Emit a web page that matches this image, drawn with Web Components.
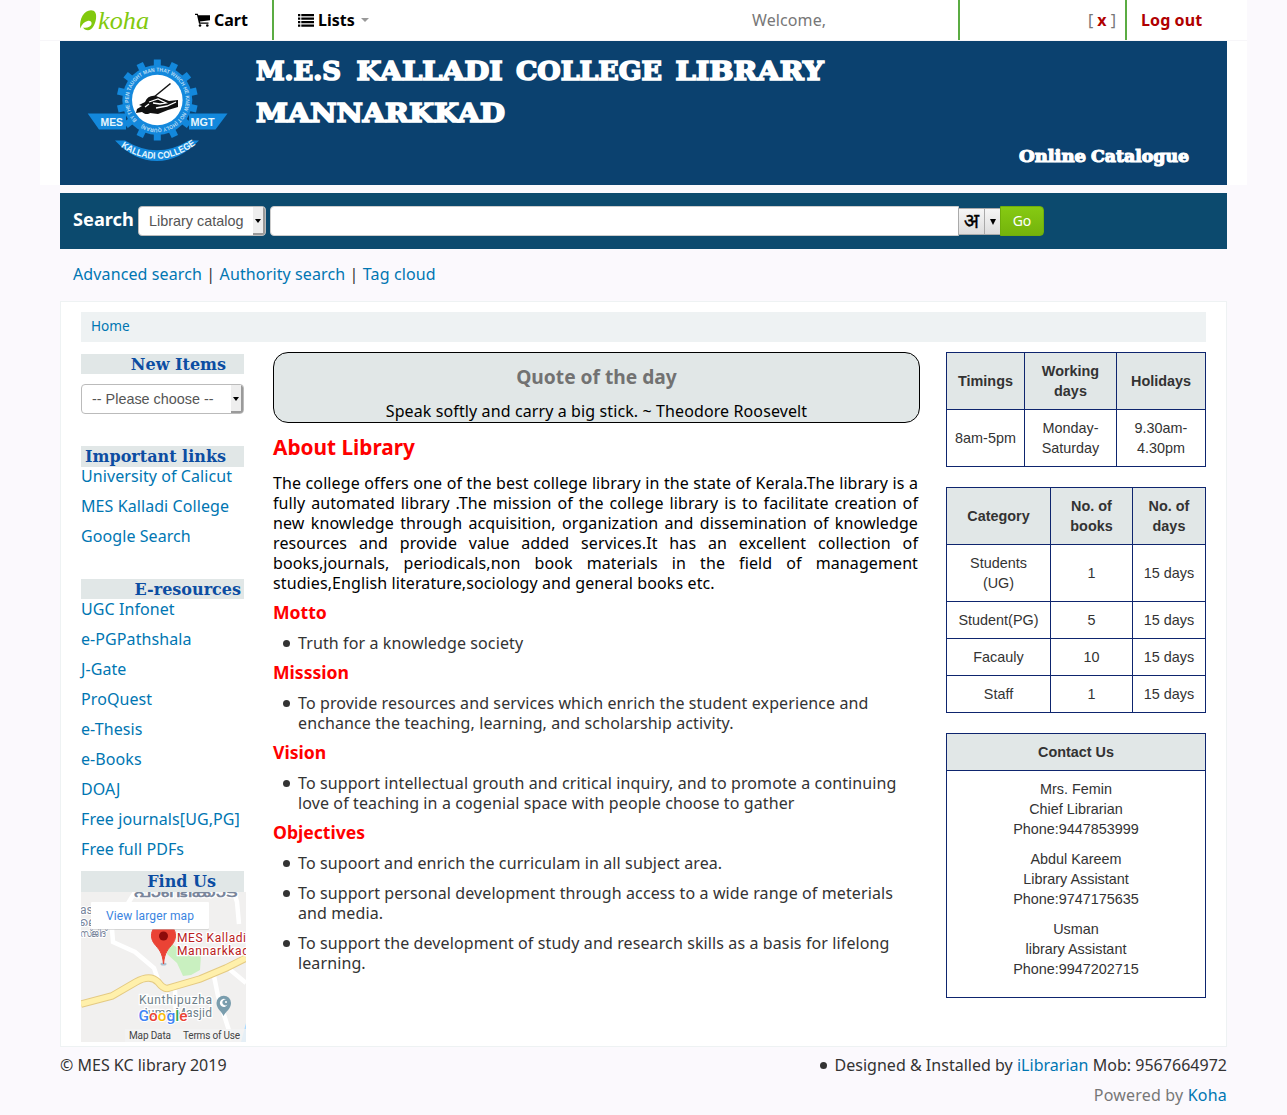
<!DOCTYPE html>
<html lang="en">
<head>
<meta charset="utf-8">
<title>MES Kalladi College Library catalog</title>
<style>
html{background:#fbf9fd}
body{margin:0;font:16px/20px "Noto Sans",sans-serif;color:#333;background:#fbf9fd}
</style>
</head>
<body>
<library-page></library-page>
<script>
function define(name, css, html, setup) {
  const t = document.createElement('template');
  t.innerHTML = '<style>*{box-sizing:border-box}:host{display:block}a{color:#0076b2;text-decoration:none}' + css + '</style>' + html;
  customElements.define(name, class extends HTMLElement {
    constructor() {
      super();
      this.attachShadow({mode: 'open'}).appendChild(t.content.cloneNode(true));
    }
    connectedCallback() { if (setup) setup(this, this.shadowRoot); }
  });
}

define('koha-logo', ':host{width:72px;height:24px}svg{display:block}', `
<svg width="72" height="24" viewBox="0 0 72 24">
<path fill-rule="evenodd" d="M1.300 20.500C0 11 5 2.200 12 2.200c4 0 5.700 3 5 8.500c-.8 6-4 11.500-8 11.500c-2.500 0-4-1-4.800-2.700c3.500.8 7.300-.2 8.300-3.200c.6-2.500-1.300-4-4-3.300c-3.400.8-5.800 3.500-7.200 7.500z" fill="#82c90d"/>
<text x="19" y="21" font-family="Liberation Serif" font-style="italic" font-weight="normal" font-size="26" fill="#82c90d" textLength="51" lengthAdjust="spacingAndGlyphs">koha</text>
</svg>`);

define('nav-bar', `
:host{height:41px;border-bottom:1px solid #f7f6f9;background:#fff;display:flex;align-items:center;font-weight:bold;color:#000;margin:0}
.s{width:2px;height:40px;background:#5bac43;align-self:flex-start}
koha-logo{margin-left:39px}
.c{margin-left:44px;display:flex;gap:4px;align-items:center;width:77px}
.l{margin-left:24px;display:flex;gap:4px;align-items:center}
.caret{border:4px solid transparent;border-top-color:#999;border-bottom:0;margin-left:2px}
.w{font-weight:normal;color:#777;margin-left:auto;width:206px;letter-spacing:.1px}
.x{font-weight:normal;color:#777;width:165px;text-align:right;padding-right:9px;white-space:pre}
b,.o{color:#b00000}.o{width:120px;padding-left:14px;letter-spacing:.1px}
svg{display:block}`, `
<koha-logo></koha-logo>
<span class="c"><svg width="15" height="14" viewBox="0 0 15 14"><path d="M0 .7h2.800l.5 1.500H15v5.100L5 8.600l.2 1h8.300v1.200H4L2 2H0z"/><circle cx="5" cy="12.500" r="1.300"/><circle cx="12.300" cy="12.500" r="1.300"/></svg>Cart</span>
<span class="s"></span>
<span class="l"><svg width="16" height="13" viewBox="0 0 16 13"><path d="M0 0h2.300v2.300H0zM3.300 0H16v2.300H3.300zM0 3.500h2.300v2.300H0zM3.300 3.500H16v2.300H3.300zM0 7h2.300v2.300H0zM3.300 7H16v2.300H3.300zM0 10.500h2.300v2.300H0zM3.300 10.500H16v2.300H3.300z"/></svg>Lists<i class="caret"></i></span>
<span class="w">Welcome,</span><span class="s"></span>
<span class="x">[ <b>x</b> ]</span><span class="s"></span><span class="o">Log out</span>`);

define('college-emblem', 'svg{display:block}', `
<svg width="150" height="120" viewBox="0 0 150 120">
<g fill="#1388dc"><g id="teeth"></g><circle cx="70.300" cy="49" r="35"/>
<path d="M.7 62.500H39v16H12zM140.500 62.500H102v16h26.500z"/>
<path d="M28 89.500H38Q70 109 102 89.500H112Q92 110 70 110Q47 110 28 89.500z"/></g>
<circle cx="70.300" cy="49" r="25.300" fill="#fff"/>
<path id="ring" fill="none" d="M50.100 69.200a28.500 28.500 0 1 1 .1 .1"/>
<text font-family="Liberation Sans" font-weight="bold" font-size="5.500" fill="#b9dcf5"><textPath href="#ring" textLength="172" lengthAdjust="spacingAndGlyphs">BY THE PEN TAUGHT MAN THAT WHICH HE KNEW NOT (HOLY QURAN)</textPath></text>
<path d="M50 58l5-3-3-1 6-3c2-5 6-7 11-6l5 2 8 3 9-1v7l-10 3-10 4-8-1c-2 2-6 1-8-1l-6 1z" fill="#111"/>
<path d="M67 46l16.500-13.500" stroke="#111" stroke-width="1.500"/>
<path d="M62 51l9-3 8 4-6 1-7-1M69 57l11-2 9-4M58 56l4-3" stroke="#fff" fill="none" stroke-width="1.300"/>
<g font-family="Liberation Sans" font-weight="bold" fill="#e7f6fc"><text x="13.500" y="75" font-size="11" textLength="22.500" lengthAdjust="spacingAndGlyphs">MES</text><text x="103.500" y="75" font-size="11" textLength="24" lengthAdjust="spacingAndGlyphs">MGT</text>
<path id="arc" fill="none" d="M32 94.500Q70 122.500 111 92"/><text font-size="9.500"><textPath href="#arc" startOffset="2" textLength="81" lengthAdjust="spacingAndGlyphs">KALLADI COLLEGE</textPath></text></g>
</svg>`, (el, r) => {
  const g = r.getElementById('teeth');
  for (let i = 0; i < 14; i++) {
    const p = document.createElementNS('http://www.w3.org/2000/svg', 'path');
    p.setAttribute('d', 'M66.800 8.500h7v9h-7z');
    p.setAttribute('transform', `rotate(${i * 360 / 14} 70.3 49)`);
    g.appendChild(p);
  }
});

define('site-banner', `
:host{height:144px;background:#0b416f;margin:0 20px;display:flex}
college-emblem{padding:10px 0 0 27px;width:190px;flex:none}
.t{flex:1;display:flex;flex-direction:column;justify-content:space-between}
svg{display:block}.r{align-self:flex-end;margin:0 33px 14px 0}
text{font-family:"DejaVu Serif",serif;font-weight:bold;fill:#fff;stroke:#fff;stroke-width:1.700}`, `
<college-emblem></college-emblem><div class="t">
<svg width="600" height="92" font-size="26"><text y="39" x="6" textLength="85" lengthAdjust="spacingAndGlyphs">M.E.S</text><text y="39" x="106.500" textLength="146" lengthAdjust="spacingAndGlyphs">KALLADI</text><text y="39" x="266" textLength="146" lengthAdjust="spacingAndGlyphs">COLLEGE</text><text y="39" x="425.500" textLength="148" lengthAdjust="spacingAndGlyphs">LIBRARY</text><text x="6" y="81" textLength="249" lengthAdjust="spacingAndGlyphs">MANNARKKAD</text></svg>
<svg class="r" width="177" height="30" font-size="17.500"><text x="2" y="21" style="stroke-width:1.200" textLength="67" lengthAdjust="spacingAndGlyphs">Online</text><text x="74" y="21" style="stroke-width:1.200" textLength="98" lengthAdjust="spacingAndGlyphs">Catalogue</text></svg></div>`);

define('select-box', `
:host{display:flex;height:30px;background:#fff;border:1px solid #bbb;border-radius:4px;font:14.400px/28px "Liberation Sans",Arial,sans-serif;color:#555;overflow:hidden}
span{flex:1;padding-left:10px;white-space:nowrap}
i{width:12px;background:#eee;border-right:2px solid #9a9a9a;border-bottom:2px solid #9a9a9a;display:flex;align-items:center;justify-content:center}
i::before{content:"";border:3.500px solid transparent;border-top:4px solid #000;border-bottom:0;margin-top:2px}`, '<span><slot></slot></span><i></i>');

define('search-bar', `
:host{height:56px;margin:8px 60px 0;background:#0c4a6e;display:flex;padding:13px 13px;align-items:flex-start}
b{color:#fff;font-size:18.200px;line-height:26px;width:65px}
select-box{width:128px;margin-right:4px}
.in{width:689px;height:30px;background:#fff;border:1px solid #ccc;border-radius:4px 0 0 4px}
.k{display:flex;height:27px;margin-top:2px;width:43px;border:1px solid #aaa;background:linear-gradient(#f6f6f6,#ddd);color:#000;margin:2px -1px 0 -1px}
.k span{width:26px;text-align:center;font:20px/23px "Noto Sans","Noto Sans Devanagari",sans-serif;-webkit-text-stroke:.3px #000;border-right:1px solid #aaa}
.k i{flex:1;display:flex;align-items:center;justify-content:center}.k i::before{content:"";border:3px solid transparent;border-top:6px solid #000;border-bottom:0}
.go{width:44px;height:30px;background:linear-gradient(#86ca12,#74b30c);border:1px solid #6fae0a;border-radius:0 4px 4px 0;color:#fff;text-align:center;font-size:14px;line-height:28px}`,
`<b>Search</b><select-box>Library catalog</select-box><div class="in"></div><div class="k"><span>अ</span><i></i></div><div class="go">Go</div>`);

define('search-links', ':host{margin:15px 73px 0;height:37px;letter-spacing:.12px}', `<a href="#">Advanced search</a> | <a href="#">Authority search</a> | <a href="#">Tag cloud</a>`);

define('side-heading', ':host{height:21px;background:#e1e7e7;text-align:right;font:bold 16px/21px "DejaVu Serif",serif;color:#0c4da2;padding-right:var(--pad,18px);white-space:nowrap;box-sizing:border-box}', '<slot></slot>');

define('link-list', 'a{display:block;height:20px;margin-bottom:10px;white-space:nowrap;letter-spacing:.08px}', '', (el, r) => {
  for (const s of el.getAttribute('items').split('|')) {
    const a = document.createElement('a'); a.href = '#'; a.textContent = s; r.appendChild(a);
  }
});

define('location-map', ':host{width:165px;height:150px;margin-right:-2px}svg{display:block}text{font-family:Roboto,"Noto Sans",sans-serif}', `
<svg width="165" height="150" viewBox="0 0 165 150">
<rect width="165" height="150" fill="#f1f0ef"/>
<path d="M88 50l10 7h14l8 6-1 15-9 5-8 1-6-13-10-9z" fill="#c9f0c0"/>
<g fill="none" stroke="#fff" stroke-width="4.500"><path d="M54 0L31 37l1 13 22 10 19 16 6 17M153 0l3 10 2 22M133 84l4 20 14 44M147 76l18 15M94 98l1 30"/></g>
<path d="M0 112l31-8 24-14q14-8 22 0q6 8 11 6l31-9 26-11 20-10" fill="none" stroke="#e4ca83" stroke-width="7.500"/>
<path d="M0 112l31-8 24-14q14-8 22 0q6 8 11 6l31-9 26-11 20-10" fill="none" stroke="#fff0ab" stroke-width="5.500"/>
<path d="M165 131v19h-5z" fill="#aadaff"/>
<g fill="#7a869b" stroke="#fff" stroke-width="2" paint-order="stroke"><text x="52" y="5" font-size="14" font-weight="bold" textLength="105" lengthAdjust="spacingAndGlyphs">പാണ്ടിക്കാട്</text>
<text x="-1" y="22" font-size="12">as</text><text x="-2" y="34" font-size="12">ലെ</text><text x="-1" y="45" font-size="11" textLength="27" lengthAdjust="spacingAndGlyphs">സ്ജിദ്</text></g>
<ellipse cx="82.500" cy="72" rx="3" ry="1.500" fill="#a9bfd0"/>
<path d="M82.500 72c-1-12-5-15-9-20c-7-9-1-21 9-21s16 12 9 21c-4 5-8 8-9 20z" fill="#ea4335" stroke="#ea4335"/><circle cx="82.500" cy="44" r="4.500" fill="#8e0b0b"/>
<g font-size="12" fill="#b92020" stroke="#fff" stroke-width="2.500" paint-order="stroke"><text x="96" y="50" textLength="69">MES Kalladi</text><text x="96" y="63" textLength="72">Mannarkkad</text></g>
<g font-size="12" fill="#6d7e88" stroke="#fff" stroke-width="2.500" paint-order="stroke"><text x="58" y="111.500" textLength="73">Kunthipuzha</text><text x="60" y="124.500" textLength="71">Juma Masjid</text></g>
<path d="M142.500 124c-2-5-7-7-7-13a7 7 0 0 1 14.500 0c0 6-5 8-7.500 13z" fill="#7a9dad"/><path d="M145 107.500a4 4 0 1 0 1.500 5a3 3 0 1 1-1.500-5z" fill="#fff"/><circle cx="145" cy="110" r="1" fill="#fff"/>
<text x="57.500" y="129" font-size="15" font-weight="500" stroke="#fff" stroke-width="2" paint-order="stroke" textLength="49" lengthAdjust="spacingAndGlyphs"><tspan fill="#4285f4">G</tspan><tspan fill="#ea4335">o</tspan><tspan fill="#fbbc05">o</tspan><tspan fill="#4285f4">g</tspan><tspan fill="#34a853">l</tspan><tspan fill="#ea4335">e</tspan></text>
<rect x="44" y="137" width="121" height="13" fill="#f4f4f4" opacity=".8"/>
<g font-size="10" fill="#444"><text x="48" y="147" textLength="42">Map Data</text><text x="102" y="147" textLength="57">Terms of Use</text></g>
<rect x="10" y="11" width="118" height="27" rx="1" fill="#bbb" opacity=".5"/><rect x="10" y="10" width="118" height="27" rx="1" fill="#fff"/>
<text x="25" y="28" font-size="12" fill="#3a84df" textLength="88">View larger map</text>
</svg>`);

define('side-column', `:host{width:163px;padding-top:2px;display:flex;flex-direction:column}
select-box{margin:10px 0 32px;width:163px}.n{height:20px}.a{height:20px;--pad:3px;margin-top:33px}.i{margin-bottom:-1px}.f{--pad:28px;margin-top:2px}.g{margin-bottom:-10px}`,
`<side-heading class="n">New Items</side-heading><select-box>-- Please choose --</select-box>
<side-heading class="i">Important links</side-heading><link-list class="g" items="University of Calicut|MES Kalladi College|Google Search"></link-list>
<side-heading class="a">E-resources</side-heading><link-list items="UGC Infonet|e-PGPathshala|J-Gate|ProQuest|e-Thesis|e-Books|DOAJ|Free journals[UG,PG]|Free full PDFs"></link-list>
<side-heading class="f">Find Us</side-heading><location-map></location-map>`);

define('quote-box', `:host{height:71px;border:1px solid #000;border-radius:15px;background:#e1e7e7;color:#000;text-align:center;padding-top:14px;box-sizing:border-box}
h4{font-size:19.200px;line-height:20px;margin:0 0 14px;color:#727272}p{margin:0;letter-spacing:.11px}`, '<h4>Quote of the day</h4><p><slot></slot></p>');

define('bullet-list', `ul{margin:0;padding-left:25px;list-style:none}li{margin-bottom:10px;white-space:pre-line;display:flex;letter-spacing:.11px}
li::before{content:"";flex:none;width:7px;height:7px;border-radius:50%;background:#333;margin:7px 8px 0 -15px}`, '<ul></ul>', (el, r) => {
  for (const s of el.getAttribute('items').split('|')) {
    const li = document.createElement('li'); li.textContent = s.replaceAll('/', '\n'); r.querySelector('ul').appendChild(li);
  }
});

define('about-library', `h3{color:#f00;font-size:20.800px;line-height:20px;margin:14px 0 16px}h4{color:#f00;font-size:17.600px;line-height:20px;margin:9px 0 11px}
p{margin:0;color:#000;text-align:justify;width:645px;letter-spacing:.1px}bullet-list{margin-bottom:-1px}`, `
<h3>About Library</h3><p>The college offers one of the best college library in the state of Kerala.The library is a fully automated library .The mission of the college library is to facilitate creation of new knowledge through acquisition, organization and dissemination of knowledge resources and provide value added services.It has an excellent collection of books,journals, periodicals,non book materials in the field of management studies,English literature,sociology and general books etc.</p>
<h4>Motto</h4><bullet-list items="Truth for a knowledge society"></bullet-list>
<h4>Misssion</h4><bullet-list items="To provide resources and services which enrich the student experience and/enchance the teaching, learning, and scholarship activity."></bullet-list>
<h4>Vision</h4><bullet-list items="To support intellectual grouth and critical inquiry, and to promote a continuing/love of teaching in a cogenial space with people choose to gather"></bullet-list>
<h4>Objectives</h4><bullet-list items="To supoort and enrich the curriculam in all subject area.|To support personal development through access to a wide range of meterials/and media.|To support the development of study and research skills as a basis for lifelong/learning."></bullet-list>`);

define('info-table', `:host{display:grid;width:260px;border:solid #0e256e;border-width:1px 0 0 1px;font:14.400px/20px "Liberation Sans",Arial,sans-serif;color:#333;text-align:center;margin-bottom:20px;box-sizing:border-box}
div{border:solid #0e256e;border-width:0 1px 1px 0;padding:8px 0;display:flex;align-items:center;justify-content:center;white-space:pre-line}.h{background:#e1e7e7;font-weight:bold}`, '', (el, r) => {
  el.style.gridTemplateColumns = el.getAttribute('cols');
  const n = el.getAttribute('cols').split(' ').length;
  el.getAttribute('cells').split('|').forEach((s, i) => {
    const d = document.createElement('div'); if (i < n) d.className = 'h';
    d.textContent = s.replaceAll('/', '\n'); r.appendChild(d);
  });
});

define('contact-card', `:host{border:1px solid #0e256e;height:265px;font:14.400px/20px "Liberation Sans",Arial,sans-serif;text-align:center;box-sizing:border-box}
h5{margin:0 0 8px;padding:8px;background:#e1e7e7;border-bottom:1px solid #0e256e;font:inherit;font-weight:bold}p{margin:0 0 10px}`,
`<h5>Contact Us</h5><p>Mrs. Femin<br>Chief Librarian<br>Phone:9447853999</p><p>Abdul Kareem<br>Library Assistant<br>Phone:9747175635</p><p>Usman<br>library Assistant<br>Phone:9947202715</p>`);

define('main-panel', `:host{margin:0 60px;height:746px;border:1px solid #eef2f3;background:#fff;padding:10px 20px 0}
.b{height:30px;background:#eef2f3;padding:4px 10px;font-size:13.600px;margin-bottom:10px}
.g{display:flex}.m{width:647px;margin:0 26px 0 29px}.r{width:260px}`, `
<div class="b"><a href="#">Home</a></div><div class="g"><side-column></side-column>
<div class="m"><quote-box>Speak softly and carry a big stick. ~ Theodore Roosevelt</quote-box><about-library></about-library></div>
<div class="r"><info-table cols="78px 92px 89px" cells="Timings|Working/days|Holidays|8am-5pm|Monday-/Saturday|9.30am-/4.30pm"></info-table>
<info-table cols="104px 82px 73px" cells="Category|No. of/books|No. of/days|Students/(UG)|1|15 days|Student(PG)|5|15 days|Facauly|10|15 days|Staff|1|15 days"></info-table>
<contact-card></contact-card></div></div>`);

define('page-footer', `:host{margin:8px 60px 0;height:60px}div{display:flex;justify-content:space-between}ul{margin:0;padding:0;list-style:none}
li::before{content:"";display:inline-block;width:7px;height:7px;border-radius:50%;background:#333;margin:0 8px 2px 0}
.p{justify-content:flex-end;color:#777;margin-top:10px;white-space:pre;letter-spacing:.2px}ul{letter-spacing:.02px}`, `
<div><span>© MES KC library 2019</span><ul><li>Designed &amp; Installed by <a href="#">iLibrarian</a> Mob: 9567664972</li></ul></div><div class="p">Powered by <a href="#">Koha</a></div>`);

define('library-page', '.top{margin:0 40px;background:#fff}', `
<div class="top"><nav-bar></nav-bar><site-banner></site-banner></div>
<search-bar></search-bar><search-links></search-links><main-panel></main-panel><page-footer></page-footer>`);
</script>
</body>
</html>
